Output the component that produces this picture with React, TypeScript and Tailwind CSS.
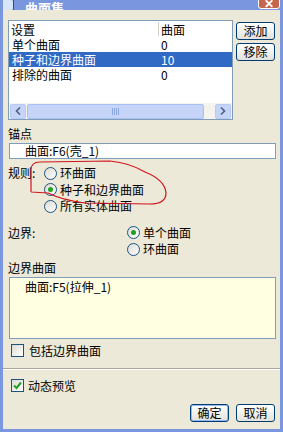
import React from "react";

const font = { fontFamily: '"Noto Sans CJK SC", "Noto Sans", sans-serif' };

const Radio = ({ checked }: { checked?: boolean }) => (
  <span className="w-[13px] h-[13px] rounded-full border border-[#1C5180] bg-gradient-to-br from-[#DCDBD5] to-white flex items-center justify-center shrink-0">
    {checked && <span className="w-[5px] h-[5px] rounded-full bg-[#21A121]" />}
  </span>
);

const Check = ({ checked }: { checked?: boolean }) => (
  <span className="w-[13px] h-[13px] border border-[#1C5180] bg-gradient-to-br from-[#DCDBD5] to-white flex items-center justify-center shrink-0">
    {checked && (
      <svg width="9" height="9" viewBox="0 0 9 9">
        <path d="M1 4.5 L3.5 7 L8 1.5" stroke="#21A121" strokeWidth="2" fill="none" />
      </svg>
    )}
  </span>
);

const Btn = ({ label, def }: { label: string; def?: boolean }) => (
  <button
    className={
      "w-[39px] h-[18px] rounded-[3px] border border-[#003C74] bg-gradient-to-b from-white to-[#E3E2DB] text-[12px] leading-none text-black flex items-center justify-center " +
      (def ? "shadow-[inset_0_0_0_1px_#97B8EE]" : "")
    }
  >
    {label}
  </button>
);

export default function App() {
  return (
    <div
      className="w-[283px] h-[432px] bg-[#7A96DF] flex flex-col px-[3px] pb-[3px] relative overflow-hidden text-[12px] text-black"
      style={font}
    >
      {/* title bar, cut off at the top */}
      <div className="h-[10px] relative overflow-hidden">
        <div className="absolute left-[-3px] bottom-[-1px] w-[14px] h-[12px] border border-[#3A4A6A] bg-[#D8E4F8] rounded-[2px]" />
        <span className="absolute left-[22px] bottom-[-4px] text-white font-bold text-[13px] leading-none">
          曲面集
        </span>
        <div className="absolute right-[0px] bottom-[1px] w-[22px] h-[20px] rounded-[3px] bg-[#C4664E] border border-white flex items-end justify-center">
          <span className="text-white font-bold text-[12px] leading-[10px]">✕</span>
        </div>
      </div>

      <div className="flex-1 bg-[#ECE9D8] pl-[5px] pr-[4px] pt-[10px] flex flex-col">
        {/* list + buttons */}
        <div className="flex gap-[3px]">
          <div className="w-[225px] h-[100px] border border-[#7F9DB9] bg-white flex flex-col">
            <div className="h-[16px] flex items-center leading-[15px]">
              <span className="w-[149px] pl-[2px]">设置</span>
              <span className="w-px h-[14px] bg-[#D4D0C8]" />
              <span className="pl-[2px]">曲面</span>
            </div>
            {[
              ["单个曲面", "0", false],
              ["种子和边界曲面", "10", true],
              ["排除的曲面", "0", false],
            ].map(([a, b, sel]) => (
              <div
                key={a as string}
                className={
                  "h-[15px] flex items-center leading-[15px] " +
                  (sel ? "bg-[#316AC5] text-white" : "")
                }
              >
                <span className="w-[150px] pl-[3px]">{a}</span>
                <span className="pl-[2px]">{b}</span>
              </div>
            ))}
            <div className="flex-1" />
            <div className="h-[16px] flex items-center bg-[#F4F3EE] px-[1px]">
              <div className="w-[16px] h-[15px] rounded-[2px] bg-[#C6D5F7] border border-[#B7CAF5] flex items-center justify-center">
                <svg width="6" height="8" viewBox="0 0 6 8">
                  <path d="M5 0.5 L1.5 4 L5 7.5" stroke="#4D6185" strokeWidth="1.6" fill="none" />
                </svg>
              </div>
              <div className="ml-[1px] w-[177px] h-[15px] rounded-[2px] bg-[#C6D5F7] border border-[#A9C0F2] flex items-center justify-center gap-[1px]">
                {[0, 1, 2, 3].map((i) => (
                  <span key={i} className="w-px h-[7px] bg-[#8CA8E4]" />
                ))}
              </div>
              <div className="flex-1" />
              <div className="w-[16px] h-[15px] rounded-[2px] bg-[#C6D5F7] border border-[#B7CAF5] flex items-center justify-center">
                <svg width="6" height="8" viewBox="0 0 6 8">
                  <path d="M1 0.5 L4.5 4 L1 7.5" stroke="#4D6185" strokeWidth="1.6" fill="none" />
                </svg>
              </div>
            </div>
          </div>
          <div className="flex flex-col gap-[3px] mt-[2px]">
            <Btn label="添加" />
            <Btn label="移除" />
          </div>
        </div>

        {/* anchor */}
        <div className="mt-[7px] h-[14px] leading-[14px]">锚点</div>
        <div className="mt-[2px] ml-[1px] h-[16px] border border-[#7F9DB9] bg-white pl-[15px] leading-[14px]">
          曲面:F6(壳_1)
        </div>

        {/* rules */}
        <div className="mt-[6px] flex">
          <div className="w-[36px] h-[16px] flex items-center">规则:</div>
          <div className="flex flex-col">
            {[
              ["环曲面", false],
              ["种子和边界曲面", true],
              ["所有实体曲面", false],
            ].map(([t, c]) => (
              <div key={t as string} className="h-[16.5px] flex items-center gap-[3px]">
                <Radio checked={c as boolean} />
                <span className="leading-[14px]">{t}</span>
              </div>
            ))}
          </div>
        </div>

        {/* boundary */}
        <div className="mt-[10px] flex">
          <div className="w-[119px] h-[16px] flex items-center">边界:</div>
          <div className="flex flex-col">
            {[
              ["单个曲面", true],
              ["环曲面", false],
            ].map(([t, c]) => (
              <div key={t as string} className="h-[16.5px] flex items-center gap-[3px]">
                <Radio checked={c as boolean} />
                <span className="leading-[14px]">{t}</span>
              </div>
            ))}
          </div>
        </div>

        <div className="mt-[3px] h-[14px] leading-[14px]">边界曲面</div>
        <div className="mt-[2px] ml-[1px] h-[62px] border border-[#7F9DB9] bg-[#FFFFE1] pl-[15px] pt-[2px] leading-[14px]">
          曲面:F5(拉伸_1)
        </div>

        <div className="mt-[5px] ml-[3px] h-[14px] flex items-center gap-[5px]">
          <Check />
          <span className="leading-[14px]">包括边界曲面</span>
        </div>

        <div className="mt-[10px] -ml-[5px] -mr-[4px] h-[2px] border-t border-[#ACA899] border-b border-b-white" />

        <div className="mt-[9px] ml-[3px] h-[14px] flex items-center gap-[4px]">
          <Check checked />
          <span className="leading-[14px]">动态预览</span>
        </div>

        <div className="mt-[11px] flex justify-end gap-[7px] pr-[1px]">
          <Btn label="确定" def />
          <Btn label="取消" />
        </div>
      </div>

      {/* hand-drawn red mark over the rule options */}
      <svg className="absolute left-0 top-0 pointer-events-none" width="283" height="432">
        <path
          d="M31 192 L31 170 Q31 162 40 162 L110 161 Q130 163 145 172 Q165 180 166 193 Q166 204 150 204 L85 203 Q62 200 48 193 L31 192"
          stroke="#D0141C"
          strokeWidth="1.2"
          fill="none"
        />
      </svg>
    </div>
  );
}
